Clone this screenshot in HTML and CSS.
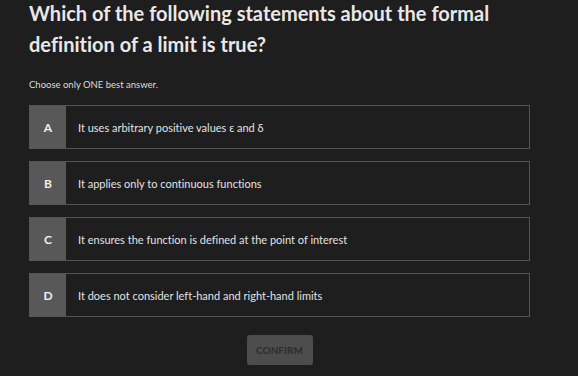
FILE: index.html
```html
<!DOCTYPE html>
<html>
<head>
<meta charset="utf-8">
<link rel="stylesheet" href="styles.css">
</head>
<body>
<main class="quiz">
  <h1 class="question">Which of the following statements about the formal definition of a limit is true?</h1>
  <p class="hint">Choose only ONE best answer.</p>
  <div class="options">
    <div class="option"><span class="letter">A</span><span class="text">It uses arbitrary positive values ε and δ</span></div>
    <div class="option"><span class="letter">B</span><span class="text">It applies only to continuous functions</span></div>
    <div class="option"><span class="letter">C</span><span class="text">It ensures the function is defined at the point of interest</span></div>
    <div class="option"><span class="letter">D</span><span class="text">It does not consider left-hand and right-hand limits</span></div>
  </div>
  <div class="actions"><button class="confirm">CONFIRM</button></div>
</main>
</body>
</html>
```
FILE: styles.css
```css
html, body {
  margin: 0;
  padding: 0;
  background: #1e1e1e;
  height: 100%;
}
body {
  font-family: "Lato", "Open Sans", sans-serif;
  font-variant-ligatures: none;
  color: #e6e6e6;
}
.quiz {
  width: 501px;
  padding: 0 0 0 29px;
}
.question {
  margin: -2px 0 0;
  font-size: 20px;
  line-height: 31px;
  font-weight: 700;
  color: #e8e8e8;
  width: 520px;
}
.hint {
  margin: 19px 0 0;
  font-size: 9.5px;
  line-height: 12px;
  color: #dcdcdc;
}
.options {
  margin-top: 14px;
  display: flex;
  flex-direction: column;
  gap: 12px;
}
.option {
  display: flex;
  height: 44px;
  box-sizing: border-box;
  border: 1px solid #555;
  background: #1e1e1e;
  align-items: stretch;
}
.letter {
  width: 36px;
  background: #585858;
  display: flex;
  align-items: center;
  justify-content: center;
  font-size: 12px;
  font-weight: 700;
  color: #f0f0f0;
}
.text {
  display: flex;
  align-items: center;
  padding-left: 12px;
  font-size: 11px;
  color: #e2e2e2;
}
.actions {
  display: flex;
  justify-content: center;
  margin-top: 18px;
}
.confirm {
  width: 66px;
  height: 30px;
  background: #4d4d4d;
  border: none;
  border-radius: 3px;
  color: #2c2c2c;
  font-family: "Lato", "Open Sans", sans-serif;
  font-size: 10px;
  font-weight: 700;
  padding: 0;
}
```
